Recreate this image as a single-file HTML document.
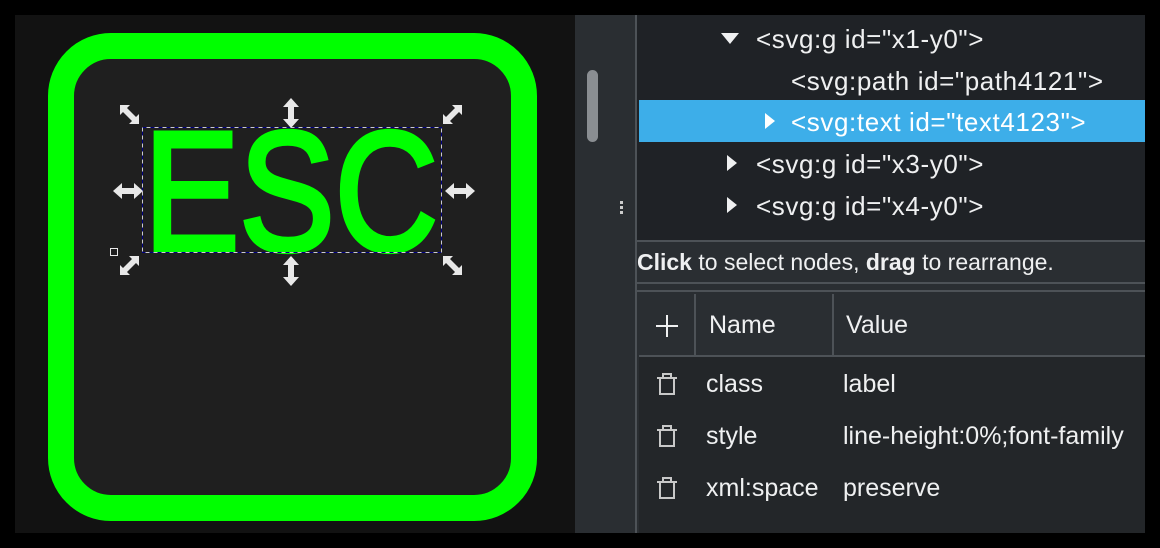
<!DOCTYPE html>
<html><head><meta charset="utf-8"><style>
*{margin:0;padding:0;box-sizing:border-box}
body{width:1160px;height:548px;background:#000;position:relative;overflow:hidden;font-family:"Liberation Sans","DejaVu Sans",sans-serif;color:#eff0f1}
.abs{position:absolute}
.tri{position:absolute;width:0;height:0}
.trow{position:absolute;font-size:26px;letter-spacing:0.6px;white-space:nowrap}
.tb{position:absolute;font-size:25px;white-space:nowrap}
</style></head><body>
<div class="abs" style="left:15px;top:15px;width:560px;height:518px;background:#121212"></div>
<svg class="abs" style="left:0;top:0" width="580" height="548">
<rect x="61" y="46" width="463" height="462" rx="50" fill="#1f1f1f" stroke="#00ff00" stroke-width="26"/>
<text x="144" y="250" font-family="Liberation Sans" font-size="170" fill="#00ff00" stroke="#00ff00" stroke-width="5" textLength="294" lengthAdjust="spacingAndGlyphs">ESC</text>
<rect x="142.5" y="127.5" width="299" height="125" fill="none" stroke="#000080" stroke-width="1" stroke-dasharray="4,4"/>
<rect x="142.5" y="127.5" width="299" height="125" fill="none" stroke="#ccc" stroke-width="1" stroke-dasharray="4,4" stroke-dashoffset="4"/>
<g fill="#e8e8e8">
<path d="M283 107 l8-9 l8 9 h-5 v12 h5 l-8 9 l-8-9 h5 v-12z"/>
<path d="M283 265 l8-9 l8 9 h-5 v12 h5 l-8 9 l-8-9 h5 v-12z"/>
<path d="M113 191 l9-8 v5 h12 v-5 l9 8 l-9 8 v-5 h-12 v5z"/>
<path d="M445 191 l9-8 v5 h12 v-5 l9 8 l-9 8 v-5 h-12 v5z"/>
<path d="M120 105 h10 l-3 3 l9 9 l3-3 v10 h-10 l3-3 l-9-9 l-3 3z"/>
<path d="M462 105 v10 l-3-3 l-9 9 l3 3 h-10 v-10 l3 3 l9-9 l-3-3z"/>
<path d="M120 275 v-10 l3 3 l9-9 l-3-3 h10 v10 l-3-3 l-9 9 l3 3z"/>
<path d="M462 275 h-10 l3-3 l-9-9 l-3 3 v-10 h10 l-3 3 l9 9 l3-3z"/>
</g>
<rect x="110.5" y="248.5" width="7" height="7" fill="none" stroke="#e8e8e8"/>
</svg>
<div class="abs" style="left:575px;top:15px;width:570px;height:518px;background:#2a2e32"></div>
<div class="abs" style="left:587px;top:70px;width:11px;height:72px;border-radius:6px;background:#8a8e92"></div>
<div class="abs" style="left:620px;top:201px;width:3px;height:3px;background:#ccc;box-shadow:0 5px #ccc,0 10px #ccc"></div>
<div class="abs" style="left:635px;top:15px;width:2px;height:518px;background:#4d5257"></div>
<div class="abs" style="left:637px;top:15px;width:508px;height:225px;background:#1f2226"></div>
<div class="abs" style="left:639px;top:100px;width:506px;height:42px;background:#3daee9"></div>
<div class="tri" style="left:721px;top:33px;border-left:9px solid transparent;border-right:9px solid transparent;border-top:11px solid #eff0f1"></div>
<div class="trow" style="left:756px;top:24px">&lt;svg:g id="x1-y0"&gt;</div>
<div class="trow" style="left:791px;top:66px">&lt;svg:path id="path4121"&gt;</div>
<div class="tri" style="left:765px;top:113px;border-top:8px solid transparent;border-bottom:8px solid transparent;border-left:10px solid #fff"></div>
<div class="trow" style="left:791px;top:107px;color:#fff">&lt;svg:text id="text4123"&gt;</div>
<div class="tri" style="left:727px;top:155px;border-top:8px solid transparent;border-bottom:8px solid transparent;border-left:10px solid #eff0f1"></div>
<div class="trow" style="left:756px;top:149px">&lt;svg:g id="x3-y0"&gt;</div>
<div class="tri" style="left:727px;top:197px;border-top:8px solid transparent;border-bottom:8px solid transparent;border-left:10px solid #eff0f1"></div>
<div class="trow" style="left:756px;top:191px">&lt;svg:g id="x4-y0"&gt;</div>
<div class="abs" style="left:637px;top:240px;width:508px;height:2px;background:#4d5257"></div>
<div class="abs" style="left:637px;top:249px;font-size:23px;white-space:nowrap"><b>Click</b> to select nodes, <b>drag</b> to rearrange.</div>
<div class="abs" style="left:637px;top:282px;width:508px;height:2px;background:#4d5257"></div>
<div class="abs" style="left:637px;top:290px;width:508px;height:2px;background:#4d5257"></div>
<div class="abs" style="left:639px;top:292px;width:506px;height:64px;background:#2a2e32"></div>
<div class="abs" style="left:694px;top:294px;width:2px;height:62px;background:#4d5257"></div>
<div class="abs" style="left:832px;top:294px;width:2px;height:62px;background:#4d5257"></div>
<div class="abs" style="left:639px;top:355px;width:506px;height:2px;background:#4d5257"></div>
<div class="abs" style="left:639px;top:357px;width:506px;height:176px;background:#232629"></div>
<div class="abs" style="left:656px;top:325px;width:22px;height:2px;background:#eff0f1"></div>
<div class="abs" style="left:666px;top:315px;width:2px;height:22px;background:#eff0f1"></div>
<div class="tb" style="left:709px;top:311px">Name</div>
<div class="tb" style="left:846px;top:311px">Value</div>
<svg class="abs" style="left:655px;top:370px" width="26" height="140">
<g fill="none" stroke="#c8c8c8" stroke-width="2">
<path d="M2 8h20M8 8V4h8v4M5 9v15h14V9"/>
<path d="M2 60h20M8 60v-4h8v4M5 61v15h14V61"/>
<path d="M2 112h20M8 112v-4h8v4M5 113v15h14v-15"/>
</g></svg>
<div class="tb" style="left:706px;top:370px">class</div>
<div class="tb" style="left:843px;top:370px">label</div>
<div class="tb" style="left:706px;top:422px">style</div>
<div class="tb" style="left:843px;top:422px;width:302px;overflow:hidden">line-height:0%;font-family</div>
<div class="tb" style="left:706px;top:474px">xml:space</div>
<div class="tb" style="left:843px;top:474px">preserve</div>
</body></html>
